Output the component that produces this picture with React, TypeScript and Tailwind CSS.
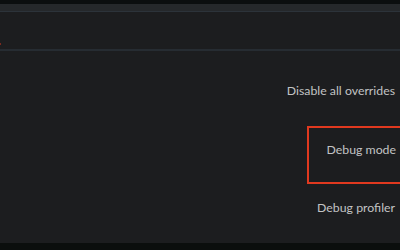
const items = ['Disable all overrides', 'Debug mode', 'Debug profiler']

const App = (): JSX.Element => (
  <div className="flex h-[250px] w-[400px] flex-col overflow-hidden bg-[#1c1d1f] font-['Lato',sans-serif] text-[12.3px] text-[#c2c3c4]">
    <div className="h-[4px] bg-[#0b0e0f]" />
    <div className="h-[8px] border-b border-[#2c333a] bg-[#25282b]" />
    <div className="relative h-[37px]">
      <div className="absolute left-0 top-[31px] h-[2px] w-[1px] bg-[#7a2a20]" />
    </div>
    <div className="h-[2px] bg-[#262c32]" />
    <div className="flex flex-1 flex-col items-end pt-[10px]">
      <div className="flex h-[60px] items-center pr-[5px]">{items[0]}</div>
      <div className="-mr-[20px] mt-[5px] flex h-[58px] w-[113px] items-start justify-end border-2 border-[#e0391f] pr-[22px] pt-[13px]">
        {items[1]}
      </div>
      <div className="flex h-[48px] items-center pr-[5px]">{items[2]}</div>
    </div>
    <div className="h-[7px] bg-[#0b0e0d]" />
  </div>
)

export default App
